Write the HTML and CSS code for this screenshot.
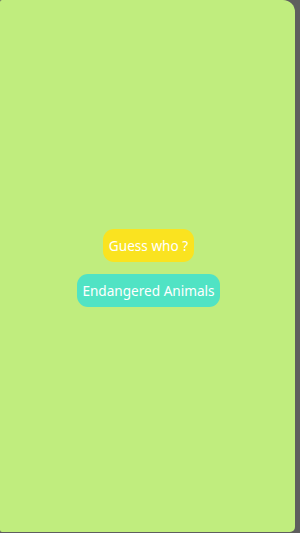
FILE: index.html
```html
<!DOCTYPE html>
<html>
<head>
<meta charset="utf-8">
<link rel="stylesheet" href="styles.css">
</head>
<body>
<div class="screen">
  <div class="menu">
    <div class="btn btn-yellow">Guess who ?</div>
    <div class="btn btn-teal">Endangered Animals</div>
  </div>
</div>
</body>
</html>
```

FILE: styles.css
```css
html, body {
  margin: 0;
  padding: 0;
  width: 300px;
  height: 533px;
  background: #5e5e5e;
  overflow: hidden;
}
.screen {
  width: 295px;
  height: 532px;
  background: #c0ed7e;
  border-radius: 2px 12px 5px 2px;
  display: flex;
  align-items: center;
  justify-content: center;
}
.menu {
  display: flex;
  flex-direction: column;
  align-items: center;
  gap: 12px;
  margin-top: 3px;
  margin-left: 2px;
}
.btn {
  height: 33px;
  box-sizing: border-box;
  display: flex;
  align-items: center;
  justify-content: center;
  border-radius: 11px;
  color: #ffffff;
  font-family: "Noto Sans", "Open Sans", sans-serif;
  font-size: 13.6px;
}
.btn-yellow {
  background: #fae320;
  width: 91px;
}
.btn-teal {
  background: #50e3c4;
  width: 143px;
}
```
